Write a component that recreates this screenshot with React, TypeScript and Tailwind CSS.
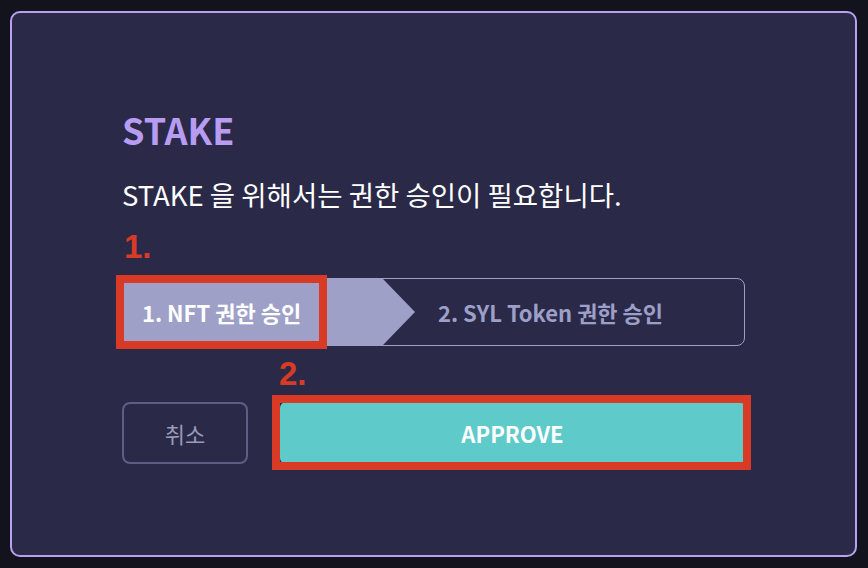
import React from "react";

const kr = { fontFamily: '"Noto Sans CJK KR", "Noto Sans", sans-serif' };
const mark = { fontFamily: '"Liberation Sans", Arial, sans-serif' };

function Steps() {
  return (
    <div className="flex h-[68px] w-full overflow-hidden rounded-[8px] border border-[#9d9fc8]">
      <div className="flex h-full w-[260px] items-center bg-[#9ea0c8] pl-[19px] text-[22px] font-bold leading-none text-white">
        1. NFT 권한 승인
      </div>
      <svg width="32" height="66" viewBox="0 0 32 66" className="shrink-0">
        <polygon points="0,0 32,33 0,66" fill="#9ea0c8" />
      </svg>
      <div className="flex h-full flex-1 items-center pl-[23px] text-[22px] font-bold leading-none text-[#9d9fc8]">
        2. SYL Token 권한 승인
      </div>
    </div>
  );
}

export default function App() {
  return (
    <div className="relative h-[568px] w-[868px] bg-[#13131e] pb-[11px] pl-[10px] pr-[11px] pt-[11px]" style={kr}>
      <div className="flex h-full flex-col rounded-[10px] border-2 border-[#b9a0f0] bg-[#2a2a48] px-[110px] pt-[98px]">
        <h1 className="text-[36px] font-bold leading-none text-[#b89cf2]">STAKE</h1>
        <p className="mt-[34px] text-[27.5px] leading-[27px] text-white">STAKE 을 위해서는 권한 승인이 필요합니다.</p>

        <div className="mt-[70px]">
          <Steps />
        </div>

        <div className="mt-[56px] flex gap-[32px]">
          <button className="flex h-[62px] w-[126px] items-center justify-center rounded-[8px] border-2 border-[#5e5e85] text-[22px] leading-none text-[#9a9ab9]">
            취소
          </button>
          <button className="flex h-[62px] flex-1 items-center justify-center rounded-[6px] bg-[#5ecaca] text-[22px] font-bold leading-none text-white">
            APPROVE
          </button>
        </div>
      </div>

      {/* annotations */}
      <span className="absolute left-[124px] top-[230px] text-[33px] font-bold leading-none text-[#d93a26]" style={mark}>
        1.
      </span>
      <div className="absolute left-[116px] top-[275px] h-[74px] w-[211px] border-[8px] border-[#d93a26]" />
      <span className="absolute left-[279px] top-[357px] text-[33px] font-bold leading-none text-[#d93a26]" style={mark}>
        2.
      </span>
      <div className="absolute left-[272px] top-[395px] h-[75px] w-[479px] border-[8px] border-[#d93a26]" />
    </div>
  );
}
